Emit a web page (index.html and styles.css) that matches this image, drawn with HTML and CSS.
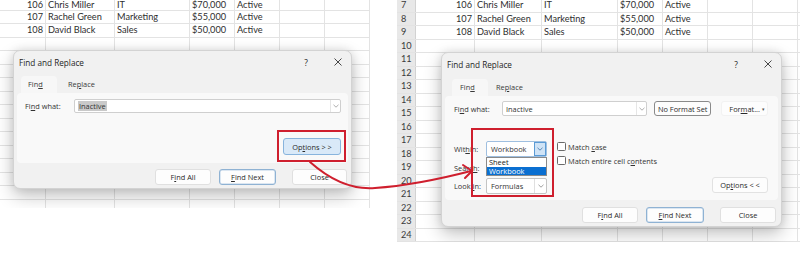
FILE: index.html
```html
<!DOCTYPE html>
<html>
<head>
<meta charset="utf-8">
<link rel="stylesheet" href="styles.css">
</head>
<body>
<div class="stage">
  <section class="shot shot-left">
    <div class="sheet">
      <div class="row row-first"><div class="cell num">106</div><div class="cell">Chris Miller</div><div class="cell">IT</div><div class="cell">$70,000</div><div class="cell">Active</div><div class="cell"></div><div class="cell"></div></div>
      <div class="row"><div class="cell num">107</div><div class="cell">Rachel Green</div><div class="cell">Marketing</div><div class="cell">$55,000</div><div class="cell">Active</div><div class="cell"></div><div class="cell"></div></div>
      <div class="row"><div class="cell num">108</div><div class="cell">David Black</div><div class="cell">Sales</div><div class="cell">$50,000</div><div class="cell">Active</div><div class="cell"></div><div class="cell"></div></div>
      <div class="row"><div class="cell"></div><div class="cell"></div><div class="cell"></div><div class="cell"></div><div class="cell"></div><div class="cell"></div><div class="cell"></div></div>
      <div class="row"><div class="cell"></div><div class="cell"></div><div class="cell"></div><div class="cell"></div><div class="cell"></div><div class="cell"></div><div class="cell"></div></div>
      <div class="row"><div class="cell"></div><div class="cell"></div><div class="cell"></div><div class="cell"></div><div class="cell"></div><div class="cell"></div><div class="cell"></div></div>
      <div class="row"><div class="cell"></div><div class="cell"></div><div class="cell"></div><div class="cell"></div><div class="cell"></div><div class="cell"></div><div class="cell"></div></div>
      <div class="row"><div class="cell"></div><div class="cell"></div><div class="cell"></div><div class="cell"></div><div class="cell"></div><div class="cell"></div><div class="cell"></div></div>
      <div class="row"><div class="cell"></div><div class="cell"></div><div class="cell"></div><div class="cell"></div><div class="cell"></div><div class="cell"></div><div class="cell"></div></div>
      <div class="row"><div class="cell"></div><div class="cell"></div><div class="cell"></div><div class="cell"></div><div class="cell"></div><div class="cell"></div><div class="cell"></div></div>
      <div class="row"><div class="cell"></div><div class="cell"></div><div class="cell"></div><div class="cell"></div><div class="cell"></div><div class="cell"></div><div class="cell"></div></div>
      <div class="row"><div class="cell"></div><div class="cell"></div><div class="cell"></div><div class="cell"></div><div class="cell"></div><div class="cell"></div><div class="cell"></div></div>
      <div class="row"><div class="cell"></div><div class="cell"></div><div class="cell"></div><div class="cell"></div><div class="cell"></div><div class="cell"></div><div class="cell"></div></div>
      <div class="row"><div class="cell"></div><div class="cell"></div><div class="cell"></div><div class="cell"></div><div class="cell"></div><div class="cell"></div><div class="cell"></div></div>
      <div class="row"><div class="cell"></div><div class="cell"></div><div class="cell"></div><div class="cell"></div><div class="cell"></div><div class="cell"></div><div class="cell"></div></div>
      <div class="row"><div class="cell"></div><div class="cell"></div><div class="cell"></div><div class="cell"></div><div class="cell"></div><div class="cell"></div><div class="cell"></div></div>
    </div>

    <div class="dialog dialog-left">
      <div class="titlebar">
        <span class="title">Find and Replace</span>
        <span class="tb-btn">?</span>
        <span class="tb-btn"><svg width="8" height="8" viewBox="0 0 8 8"><path d="M0.5 0.5L7.5 7.5M7.5 0.5L0.5 7.5" stroke="#333" stroke-width="0.9" fill="none"/></svg></span>
      </div>
      <div class="tabs">
        <span class="tab tab-on">Fin<u>d</u></span>
        <span class="tab">Re<u>p</u>lace</span>
      </div>
      <div class="panel">
        <div class="find-row">
          <span class="lbl lbl-find">Fi<u>n</u>d what:</span>
          <div class="input input-wide"><span class="sel">Inactive</span><span class="chev"><svg width="6" height="4" viewBox="0 0 6 4"><path d="M0.5 0.8L3 3.2L5.5 0.8" stroke="#999" stroke-width="0.8" fill="none"/></svg></span></div>
        </div>
        <div class="panel-actions">
          <span class="btn btn-hot btn-opt"><span>Op<u>t</u>ions &gt; &gt;</span></span>
        </div>
      </div>
      <div class="footer">
        <span class="btn btn-w"><span>F<u>i</u>nd All</span></span>
        <span class="btn btn-w btn-default"><span><u>F</u>ind Next</span></span>
        <span class="btn btn-w btn-close">Close</span>
      </div>
    </div>

    <div class="callout callout-left"></div>
  </section>

  <section class="shot shot-right">
    <div class="sheet">
      <div class="row"><div class="cell hdr">7</div><div class="cell num">106</div><div class="cell">Chris Miller</div><div class="cell">IT</div><div class="cell">$70,000</div><div class="cell">Active</div><div class="cell"></div><div class="cell"></div><div class="cell"></div></div>
      <div class="row"><div class="cell hdr">8</div><div class="cell num">107</div><div class="cell">Rachel Green</div><div class="cell">Marketing</div><div class="cell">$55,000</div><div class="cell">Active</div><div class="cell"></div><div class="cell"></div><div class="cell"></div></div>
      <div class="row"><div class="cell hdr">9</div><div class="cell num">108</div><div class="cell">David Black</div><div class="cell">Sales</div><div class="cell">$50,000</div><div class="cell">Active</div><div class="cell"></div><div class="cell"></div><div class="cell"></div></div>
      <div class="row"><div class="cell hdr">10</div><div class="cell"></div><div class="cell"></div><div class="cell"></div><div class="cell"></div><div class="cell"></div><div class="cell"></div><div class="cell"></div><div class="cell"></div></div>
      <div class="row"><div class="cell hdr">11</div><div class="cell"></div><div class="cell"></div><div class="cell"></div><div class="cell"></div><div class="cell"></div><div class="cell"></div><div class="cell"></div><div class="cell"></div></div>
      <div class="row"><div class="cell hdr">12</div><div class="cell"></div><div class="cell"></div><div class="cell"></div><div class="cell"></div><div class="cell"></div><div class="cell"></div><div class="cell"></div><div class="cell"></div></div>
      <div class="row"><div class="cell hdr">13</div><div class="cell"></div><div class="cell"></div><div class="cell"></div><div class="cell"></div><div class="cell"></div><div class="cell"></div><div class="cell"></div><div class="cell"></div></div>
      <div class="row"><div class="cell hdr">14</div><div class="cell"></div><div class="cell"></div><div class="cell"></div><div class="cell"></div><div class="cell"></div><div class="cell"></div><div class="cell"></div><div class="cell"></div></div>
      <div class="row"><div class="cell hdr">15</div><div class="cell"></div><div class="cell"></div><div class="cell"></div><div class="cell"></div><div class="cell"></div><div class="cell"></div><div class="cell"></div><div class="cell"></div></div>
      <div class="row"><div class="cell hdr">16</div><div class="cell"></div><div class="cell"></div><div class="cell"></div><div class="cell"></div><div class="cell"></div><div class="cell"></div><div class="cell"></div><div class="cell"></div></div>
      <div class="row"><div class="cell hdr">17</div><div class="cell"></div><div class="cell"></div><div class="cell"></div><div class="cell"></div><div class="cell"></div><div class="cell"></div><div class="cell"></div><div class="cell"></div></div>
      <div class="row"><div class="cell hdr">18</div><div class="cell"></div><div class="cell"></div><div class="cell"></div><div class="cell"></div><div class="cell"></div><div class="cell"></div><div class="cell"></div><div class="cell"></div></div>
      <div class="row"><div class="cell hdr">19</div><div class="cell"></div><div class="cell"></div><div class="cell"></div><div class="cell"></div><div class="cell"></div><div class="cell"></div><div class="cell"></div><div class="cell"></div></div>
      <div class="row"><div class="cell hdr">20</div><div class="cell"></div><div class="cell"></div><div class="cell"></div><div class="cell"></div><div class="cell"></div><div class="cell"></div><div class="cell"></div><div class="cell"></div></div>
      <div class="row"><div class="cell hdr">21</div><div class="cell"></div><div class="cell"></div><div class="cell"></div><div class="cell"></div><div class="cell"></div><div class="cell"></div><div class="cell"></div><div class="cell"></div></div>
      <div class="row"><div class="cell hdr">22</div><div class="cell"></div><div class="cell"></div><div class="cell"></div><div class="cell"></div><div class="cell"></div><div class="cell"></div><div class="cell"></div><div class="cell"></div></div>
      <div class="row"><div class="cell hdr">23</div><div class="cell"></div><div class="cell"></div><div class="cell"></div><div class="cell"></div><div class="cell"></div><div class="cell"></div><div class="cell"></div><div class="cell"></div></div>
      <div class="row"><div class="cell hdr">24</div><div class="cell"></div><div class="cell"></div><div class="cell"></div><div class="cell"></div><div class="cell"></div><div class="cell"></div><div class="cell"></div><div class="cell"></div></div>
    </div>

    <div class="dialog dialog-right">
      <div class="titlebar">
        <span class="title">Find and Replace</span>
        <span class="tb-btn">?</span>
        <span class="tb-btn"><svg width="8" height="8" viewBox="0 0 8 8"><path d="M0.5 0.5L7.5 7.5M7.5 0.5L0.5 7.5" stroke="#333" stroke-width="0.9" fill="none"/></svg></span>
      </div>
      <div class="tabs tabs-r">
        <span class="tab tab-on">Fin<u>d</u></span>
        <span class="tab">Re<u>p</u>lace</span>
      </div>
      <div class="panel panel-r">
        <div class="find-row">
          <span class="lbl lbl-find">Fi<u>n</u>d what:</span>
          <div class="input input-mid"><span>Inactive</span><span class="chev"><svg width="6" height="4" viewBox="0 0 6 4"><path d="M0.5 0.8L3 3.2L5.5 0.8" stroke="#999" stroke-width="0.8" fill="none"/></svg></span></div>
          <span class="btn btn-nfs">No Format Set</span>
          <span class="btn btn-fmt"><span>For<u>m</u>at...</span><span class="caret">&#9662;</span></span>
        </div>
        <div class="opts-row">
          <div class="combo-col">
            <span class="lbl">Wit<u>h</u>in:</span>
            <div class="combo combo-open">
              <span>Workbook</span>
              <span class="combo-btn combo-btn-on"><svg width="6" height="4" viewBox="0 0 6 4"><path d="M0.5 0.8L3 3.2L5.5 0.8" stroke="#3a6ea5" stroke-width="0.8" fill="none"/></svg></span>
              <div class="droplist">
                <div class="dl-item">Sheet</div>
                <div class="dl-item dl-on">Workbook</div>
              </div>
            </div>
            <span class="lbl">Searc<u>h</u>:</span>
            <div class="combo-hidden"></div>
            <span class="lbl">Look <u>i</u>n:</span>
            <div class="combo">
              <span>Formulas</span>
              <span class="combo-btn"><svg width="6" height="4" viewBox="0 0 6 4"><path d="M0.5 0.8L3 3.2L5.5 0.8" stroke="#888" stroke-width="0.8" fill="none"/></svg></span>
            </div>
          </div>
          <div class="checks">
            <label class="check"><span class="box"></span><span>Match <u>c</u>ase</span></label>
            <label class="check"><span class="box"></span><span>Match entire cell c<u>o</u>ntents</span></label>
          </div>
          <span class="btn btn-opt-r"><span>Op<u>t</u>ions &lt; &lt;</span></span>
        </div>
      </div>
      <div class="footer footer-r">
        <span class="btn btn-w"><span>F<u>i</u>nd All</span></span>
        <span class="btn btn-w btn-default btn-next-r"><span><u>F</u>ind Next</span></span>
        <span class="btn btn-w btn-close">Close</span>
      </div>
    </div>

    <div class="callout callout-right"></div>
  </section>

  <svg class="arrow" width="800" height="262" viewBox="0 0 800 262">
    <path d="M310 162 C 328 178, 350 190, 375 188 C 405 186, 440 179, 471 171" stroke="#cf1f2e" stroke-width="2" fill="none" stroke-linecap="round"/>
    <path d="M463 165 L472 171 L465 178" stroke="#cf1f2e" stroke-width="2" fill="none" stroke-linecap="round" stroke-linejoin="round"/>
  </svg>
</div>
</body>
</html>
```
FILE: styles.css
```css
* { box-sizing: border-box; margin: 0; padding: 0; }

body {
  width: 800px;
  height: 262px;
  background: #ffffff;
  font-family: "Open Sans", "Noto Sans", sans-serif;
  overflow: hidden;
}

.stage {
  position: relative;
  display: flex;
  align-items: flex-start;
  width: 800px;
  height: 262px;
}

.shot { position: relative; overflow: hidden; background: #fff; }
.shot-left { width: 370px; height: 208px; }
.shot-right { width: 403px; height: 242px; margin-left: 27px; }

.sheet { display: flex; flex-direction: column; }
.shot-right .sheet { margin-top: -1px; }

.row {
  display: grid;
  height: 13.5px;
  flex: 0 0 13.5px;
  border-bottom: 1px solid #e3e3e3;
  font-family: "Lato", "Open Sans", sans-serif;
  font-size: 9.2px;
  line-height: 12.5px;
  color: #2e2e2e;
}
.row-first {
  height: 10.5px;
  flex: 0 0 10.5px;
  line-height: 9.5px;
}
.shot-left .row { grid-template-columns: 46px 69px 75px 45px 45px 45px 45px; }
.shot-right .row { grid-template-columns: 19px 59px 67px 76px 45px 45px 45px 45px 20px; }

.cell {
  border-right: 1px solid #e3e3e3;
  padding: 0 2px;
  white-space: nowrap;
  overflow: hidden;
}
.num { text-align: right; }
.hdr {
  background: #e8e8e8;
  color: #3a3a3a;
  padding-left: 4px;
  border-right: 1px solid #d2d2d2;
}

/* dialogs */
.dialog {
  position: absolute;
  display: flex;
  flex-direction: column;
  background: #f1f1f1;
  border: 1px solid #d3d3d3;
  border-radius: 7px;
  box-shadow: 0 7px 18px rgba(0, 0, 0, 0.24), 0 0 8px rgba(0, 0, 0, 0.1);
  font-size: 7.4px;
  color: #262626;
}
.dialog-left { left: 13px; top: 50px; width: 339px; height: 139px; }
.dialog-right { left: 44px; top: 52px; width: 341px; height: 175px; }

u { text-decoration: underline; text-underline-offset: 1px; text-decoration-thickness: 0.6px; }

.titlebar {
  display: flex;
  align-items: center;
  height: 21px;
  padding: 1px 3px 0 5px;
  font-size: 8.2px;
  color: #1e1e1e;
}
.title { flex: 1; }
.tb-btn {
  width: 20px;
  display: flex;
  justify-content: center;
  align-items: center;
  font-size: 8.4px;
}
.tb-btn + .tb-btn { margin-left: 12px; }

.tabs {
  display: flex;
  align-items: flex-end;
  height: 21px;
  padding-left: 7px;
}
.tab {
  height: 17px;
  line-height: 16px;
  padding-left: 11px;
  color: #3a3a3a;
}
.tab-on {
  width: 36px;
  padding-left: 7px;
  background: #f7f7f7;
  border-radius: 4px 4px 0 0;
}
.tabs-r { padding-left: 10px; height: 22px; }
.tabs-r .tab-on { padding-left: 8px; }
.tabs-r .tab { padding-left: 8px; }

.panel {
  margin: 0 3px;
  height: 70px;
  padding: 6px 7px 0 8px;
  background: #f9f9f9;
  border-radius: 4px;
}
.panel-r { height: 104px; padding: 5px 10px 0 9px; }

.find-row { display: flex; align-items: center; height: 14px; }
.panel-r .find-row { height: 15px; }
.lbl { color: #333; }
.lbl-find { width: 49px; flex: none; }
.panel-r .lbl-find { width: 48px; }

.input {
  height: 100%;
  display: flex;
  align-items: center;
  padding-left: 3px;
  background: #fff;
  border: 1px solid #cfcfcf;
  border-radius: 2px;
  color: #333;
}
.input-wide { flex: 1; }
.input-mid { width: 145px; flex: none; }
.sel { background: #c9c9c9; padding: 0 1px; line-height: 10px; }
.chev {
  margin-left: auto;
  width: 10px;
  height: 100%;
  display: flex;
  align-items: center;
  justify-content: center;
  border-left: 1px solid #e6e6e6;
}

.btn {
  display: flex;
  align-items: center;
  justify-content: center;
  height: 16px;
  background: #fdfdfd;
  border: 1px solid #e0e0e0;
  border-radius: 3px;
  color: #2a2a2a;
  white-space: nowrap;
}
.btn-hot { background: #d9e9f8; border-color: #88b4dd; }
.btn-default { border: 1px solid #8fb2d3; box-shadow: inset 0 0 0 0.5px #b9d0e6; }

.panel-actions { display: flex; justify-content: flex-end; margin-top: 25px; }
.btn-opt { width: 58px; height: 17px; }

.btn-nfs { width: 59px; height: 15px; margin-left: 7px; border-color: #8a8a8a; }
.btn-fmt { width: 48px; height: 15px; margin-left: 10px; border-color: #f2f2f2; position: relative; }
.caret { position: absolute; right: 2px; font-size: 5px; color: #555; }

.footer {
  flex: 1;
  display: flex;
  justify-content: flex-end;
  padding: 6px 4px 0 0;
  gap: 8px;
}
.footer-r { padding: 7px 5px 0 0; }
.btn-w { width: 56px; }
.btn-default { width: 57px; }
.btn-next-r { width: 58px; }
.btn-close { margin-left: 8px; width: 55px; }
.footer-r .btn-close { width: 56px; }

/* options area */
.opts-row { display: flex; margin-top: 25px; }
.combo-col {
  display: grid;
  grid-template-columns: 32px 61px;
  grid-template-rows: 16px 16px 16px;
  row-gap: 2.5px;
  align-items: center;
}
.combo {
  position: relative;
  height: 16px;
  display: flex;
  align-items: center;
  padding-left: 4px;
  background: #fff;
  border: 1px solid #c4c4c4;
  border-radius: 2px;
  color: #333;
}
.combo-open { border-color: #9fbfe0; }
.combo-hidden { height: 16px; }
.combo-btn {
  margin-left: auto;
  width: 12px;
  height: 100%;
  display: flex;
  align-items: center;
  justify-content: center;
  border-left: 1px solid #e0e0e0;
}
.combo-btn-on { background: #cfe3f6; border: 1px solid #5b9bd5; }
.droplist {
  position: absolute;
  top: 15px;
  left: -1px;
  width: 61px;
  background: #fff;
  border: 1px solid #8a8a8a;
  z-index: 2;
}
.dl-item { height: 8.5px; line-height: 8.5px; padding-left: 2px; color: #222; }
.dl-on { background: #0a6fd1; color: #fff; }

.checks {
  display: flex;
  flex-direction: column;
  gap: 5px;
  margin-left: 10px;
  padding-top: 1px;
  flex: 1;
}
.check { display: flex; align-items: center; gap: 2px; height: 9px; color: #333; }
.box {
  width: 9px;
  height: 9px;
  background: #fff;
  border: 1px solid #6a6a6a;
  border-radius: 1.5px;
}
.btn-opt-r { width: 56px; align-self: flex-end; margin-bottom: 1px; border-color: #e2e2e2; }

/* annotations */
.callout {
  position: absolute;
  border: 2px solid #cf1f2e;
  z-index: 3;
}
.callout-left { left: 277px; top: 130px; width: 69px; height: 32px; }
.callout-right { left: 74px; top: 128px; width: 83px; height: 69px; }

.arrow {
  position: absolute;
  left: 0;
  top: 0;
  pointer-events: none;
  z-index: 5;
}
```
